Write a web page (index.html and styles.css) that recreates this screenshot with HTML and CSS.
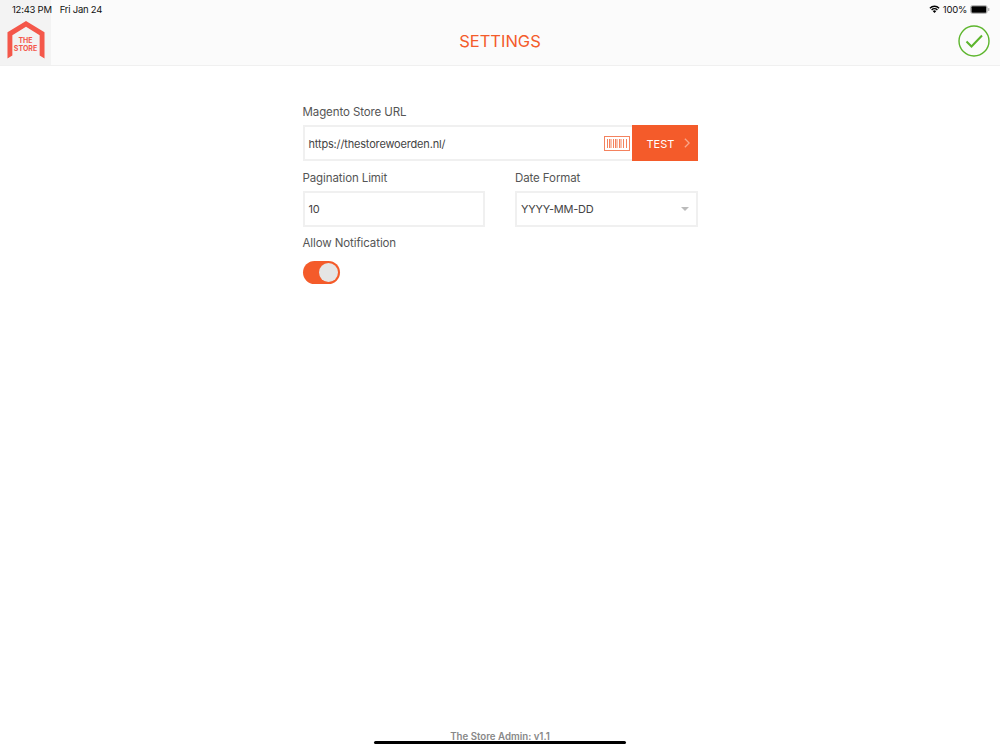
FILE: index.html
```html
<!DOCTYPE html>
<html lang="en">
<head>
<meta charset="utf-8">
<title>Settings</title>
<link rel="stylesheet" href="styles.css">
</head>
<body>
<div class="status">
  <div class="status-left"><span>12:43 PM</span><span>Fri Jan 24</span></div>
  <div class="status-right">
    <svg class="wifi" width="11" height="8" viewBox="0 0 12 9"><path d="M0.3 3A8 8 0 0 1 11.7 3L10.6 4.1A6.5 6.5 0 0 0 1.4 4.1Z" fill="#000"/><path d="M2.2 5A5.3 5.3 0 0 1 9.8 5L8.7 6.1A3.8 3.8 0 0 0 3.3 6.1Z" fill="#000"/><path d="M4.1 7A2.6 2.6 0 0 1 7.9 7L6 9Z" fill="#000"/></svg>
    <span>100%</span>
    <svg width="20" height="9" viewBox="0 0 22 10"><rect x="0.5" y="0.5" width="18.5" height="9" rx="2.5" fill="none" stroke="#aaa"/><rect x="1.500" y="1.500" width="16.500" height="7" rx="1" fill="#000"/><rect x="20" y="3.2" width="1.4" height="3.6" rx="0.7" fill="#aaa"/></svg>
  </div>
</div>
<header class="header">
  <div class="logo">
    <svg class="logo-mark" width="38" height="38" viewBox="0 0 38 39"><path d="M19 0L38 11.500V38.500L33 35.500V14.500L19 6L5 14.500V35.500L0 38.500V11.500Z" fill="#f4574a"/></svg>
    <span class="logo-text">THE<br>STORE</span>
  </div>
  <h1 class="title">SETTINGS</h1>
  <svg class="check" width="32" height="32" viewBox="0 0 32 32"><circle cx="16" cy="16" r="15" fill="none" stroke="#5cb52c" stroke-width="1.400"/><path d="M8.500 16.500L13.500 21.500L24 10.500" fill="none" stroke="#5cb52c" stroke-width="2"/></svg>
</header>
<main class="form">
  <label class="label">Magento Store URL</label>
  <div class="url-row">
    <div class="field url-field">
      <span>https://thestorewoerden.nl/</span>
      <svg class="barcode" width="26" height="15" viewBox="0 0 26 15"><rect x="0.500" y="0.500" width="25" height="14" fill="none" stroke="#f4825e"/><path d="M3.500 3V12M5.500 3V12M7 3V12M9.500 3V12M11.500 3V12M13 3V12M15.500 3V12M17 3V12M19.500 3V12M22.500 3V12" stroke="#f4825e" fill="none"/></svg>
    </div>
    <button class="test"><span>TEST</span><svg width="6" height="10" viewBox="0 0 7 11"><path d="M1 0.500L6 5.500L1 10.500" fill="none" stroke="#f9a78c" stroke-width="1.500"/></svg></button>
  </div>
  <div class="two-col">
    <div class="col">
      <label class="label">Pagination Limit</label>
      <div class="field"><span>10</span></div>
    </div>
    <div class="col">
      <label class="label">Date Format</label>
      <div class="field"><span>YYYY-MM-DD</span><i class="caret"></i></div>
    </div>
  </div>
  <label class="label">Allow Notification</label>
  <div class="toggle"><i class="knob"></i></div>
</main>
<footer class="footer">The Store Admin: v1.1</footer>
<div class="home-bar"></div>
</body>
</html>
```
FILE: styles.css
```css
* { box-sizing: border-box; }
html, body { margin: 0; height: 100%; }
body {
  position: relative;
  width: 1000px;
  height: 750px;
  overflow: hidden;
  background: #fff;
  font-family: Inter, "Liberation Sans", sans-serif;
  color: #4a4a4a;
}
.status {
  position: absolute;
  z-index: 2;
  top: 0;
  left: 0;
  right: 0;
  height: 17px;
  padding: 1px 10px 0 12px;
  display: flex;
  justify-content: space-between;
  align-items: center;
  font-size: 9.500px;
  letter-spacing: -0.25px;
  color: #111;
}
.status-left { display: flex; gap: 8px; }
.status-right { display: flex; align-items: center; gap: 3px; }
.wifi { margin-right: 0; }
.header {
  height: 66px;
  display: flex;
  align-items: stretch;
  background: #fbfbfb;
  border-bottom: 1px solid #f0f0f0;
  position: relative;
}
.logo {
  width: 51px;
  background: #f3f3f3;
  position: relative;
  padding: 21px 0 0 7px;
}
.logo-mark { display: block; }
.logo-text {
  position: absolute;
  left: 0;
  width: 51px;
  top: 37px;
  text-align: center;
  font-size: 7px;
  line-height: 8px;
  font-weight: 700;
  color: #f4574a;
}
.title {
  flex: 1;
  margin: 0;
  text-align: center;
  font-size: 16.500px;
  line-height: 82px;
  height: 65px;
  font-weight: 400;
  color: #f45b2a;
}
.check { margin: 25px 10px 0 9px; }
.form {
  width: 395px;
  margin: 0 auto;
  padding-top: 38px;
}
.label {
  display: block;
  font-size: 11.500px;
  letter-spacing: -0.1px;
  line-height: 17px;
  height: 21px;
  color: #555;
}
.col .label { height: 22px; line-height: 18px; }
.url-row { display: flex; height: 36px; margin-bottom: 8px; }
.field {
  height: 36px;
  padding: 0 4px;
  display: flex;
  align-items: center;
  justify-content: space-between;
  border: 2px solid #f0f0f0;
  font-size: 11px;
  letter-spacing: -0.17px;
  color: #444;
  background: #fff;
}
.url-field { flex: 1; border-right: 0; padding: 1px 2px 0 4px; }
.barcode { display: block; }
.test {
  width: 66px;
  height: 36px;
  padding: 2px 8px 0 15px;
  border: 0;
  background: #f45b2a;
  display: flex;
  align-items: center;
  justify-content: space-between;
  color: #fff;
  font: 400 11px Inter, "Liberation Sans", sans-serif;
}
.test svg { margin-top: -2px; }
.two-col { display: flex; gap: 30px; margin-bottom: 8px; }
.col { flex: 1; }
.col .field { letter-spacing: -0.25px; }
.caret {
  border-left: 4px solid transparent;
  border-right: 4px solid transparent;
  border-top: 4px solid #bbb;
  margin-right: 3px;
}
.toggle {
  margin-top: 5px;
  width: 37px;
  height: 23px;
  border-radius: 12px;
  background: #f45b2a;
  padding: 2px;
  display: flex;
  justify-content: flex-end;
}
.knob {
  width: 19px;
  height: 19px;
  border-radius: 50%;
  background: #e5e5e5;
}
.footer {
  position: absolute;
  left: 0;
  right: 0;
  top: 731px;
  text-align: center;
  font-size: 9.700px;
  line-height: 12px;
  font-weight: 600;
  color: #888;
}
.home-bar {
  position: absolute;
  left: 374px;
  top: 741px;
  width: 252px;
  height: 3px;
  border-radius: 2px;
  background: #000;
}
```
